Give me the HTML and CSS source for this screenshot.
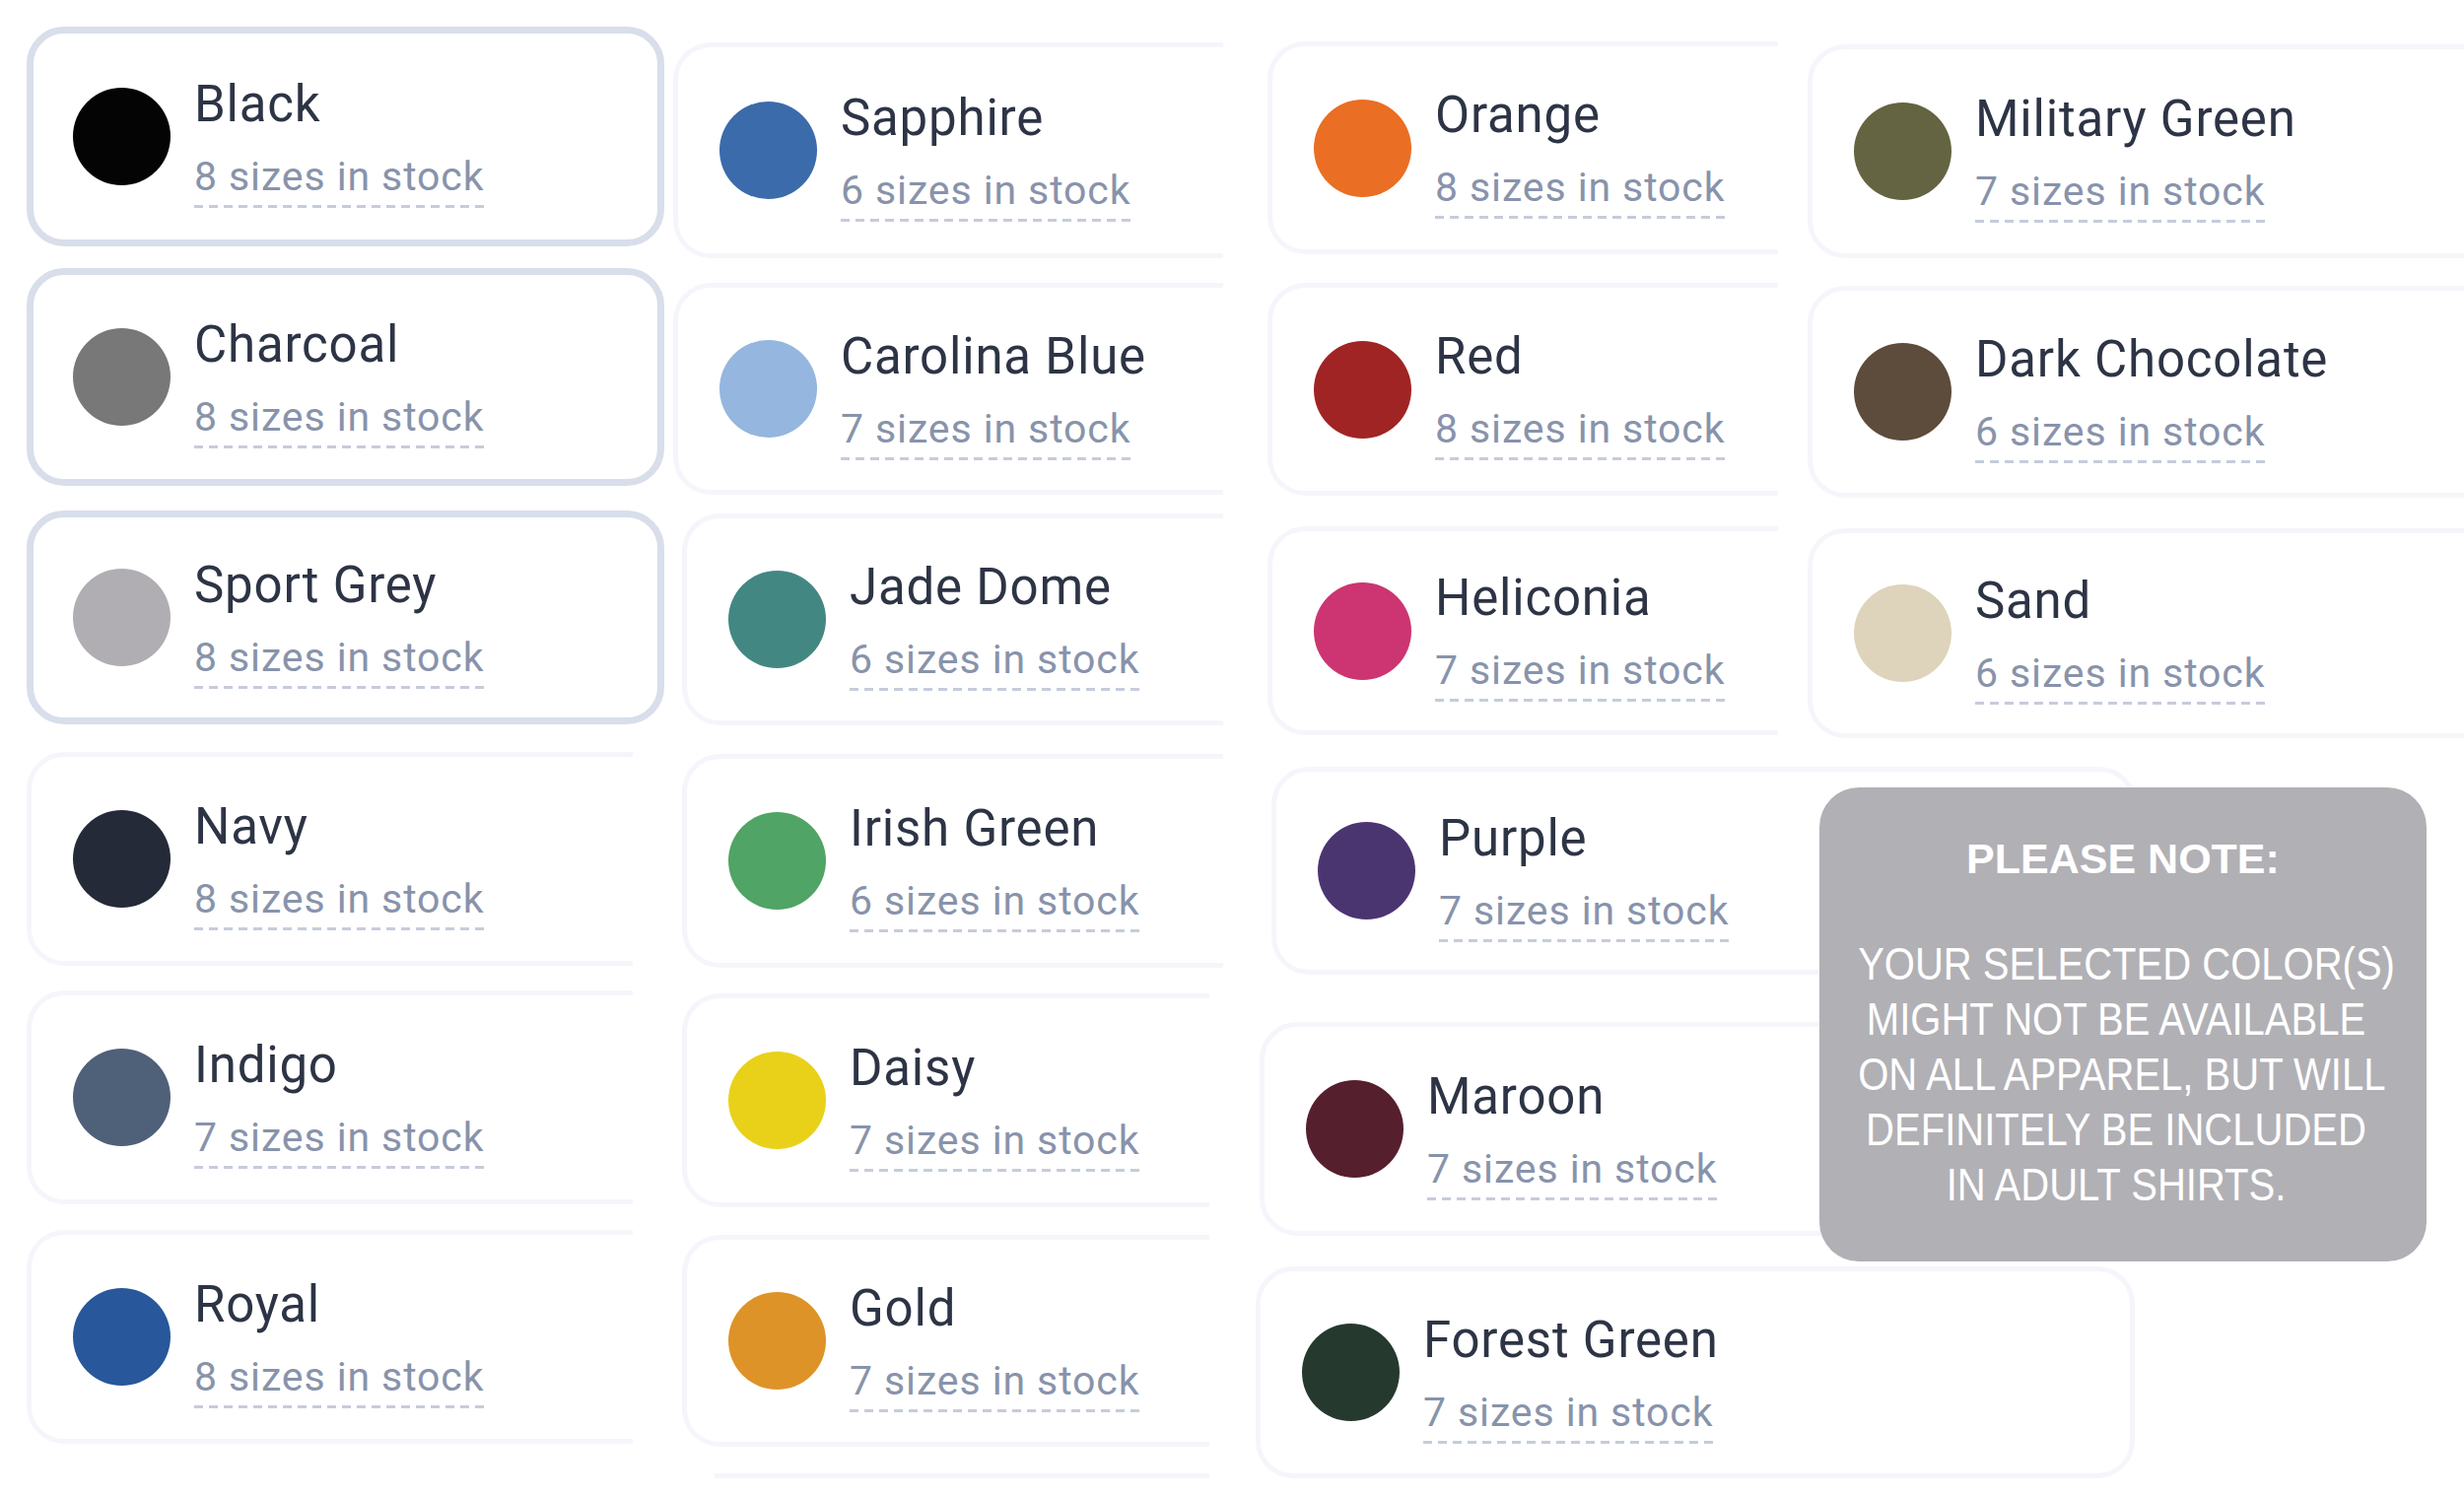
FILE: index.html
```html
<!DOCTYPE html>
<html lang="en">
<head>
<meta charset="utf-8">
<title>Colors</title>
<link rel="stylesheet" href="styles.css">
</head>
<body>
<div class="board">
  <div class="col col1">
    <div class="card sel c-black"><span class="dot"></span><div class="info"><div class="name">Black</div><span class="stock">8 sizes in stock</span></div></div>
    <div class="card sel c-charcoal"><span class="dot"></span><div class="info"><div class="name">Charcoal</div><span class="stock">8 sizes in stock</span></div></div>
    <div class="card sel c-sport"><span class="dot"></span><div class="info"><div class="name">Sport Grey</div><span class="stock">8 sizes in stock</span></div></div>
    <div class="card clip c-navy"><span class="dot"></span><div class="info"><div class="name">Navy</div><span class="stock">8 sizes in stock</span></div></div>
    <div class="card clip c-indigo"><span class="dot"></span><div class="info"><div class="name">Indigo</div><span class="stock">7 sizes in stock</span></div></div>
    <div class="card clip c-royal"><span class="dot"></span><div class="info"><div class="name">Royal</div><span class="stock">8 sizes in stock</span></div></div>
  </div>
  <div class="col col2">
    <div class="card clip c-sapphire"><span class="dot"></span><div class="info"><div class="name">Sapphire</div><span class="stock">6 sizes in stock</span></div></div>
    <div class="card clip c-carolina"><span class="dot"></span><div class="info"><div class="name">Carolina Blue</div><span class="stock">7 sizes in stock</span></div></div>
    <div class="card clip c-jade"><span class="dot"></span><div class="info"><div class="name">Jade Dome</div><span class="stock">6 sizes in stock</span></div></div>
    <div class="card clip c-irish"><span class="dot"></span><div class="info"><div class="name">Irish Green</div><span class="stock">6 sizes in stock</span></div></div>
    <div class="card clip c-daisy"><span class="dot"></span><div class="info"><div class="name">Daisy</div><span class="stock">7 sizes in stock</span></div></div>
    <div class="card clip c-gold"><span class="dot"></span><div class="info"><div class="name">Gold</div><span class="stock">7 sizes in stock</span></div></div>
    <div class="edge-line"></div>
  </div>
  <div class="col col3">
    <div class="card clip c-orange"><span class="dot"></span><div class="info"><div class="name">Orange</div><span class="stock">8 sizes in stock</span></div></div>
    <div class="card clip c-red"><span class="dot"></span><div class="info"><div class="name">Red</div><span class="stock">8 sizes in stock</span></div></div>
    <div class="card clip c-heliconia"><span class="dot"></span><div class="info"><div class="name">Heliconia</div><span class="stock">7 sizes in stock</span></div></div>
    <div class="card c-purple"><span class="dot"></span><div class="info"><div class="name">Purple</div><span class="stock">7 sizes in stock</span></div></div>
    <div class="card c-maroon"><span class="dot"></span><div class="info"><div class="name">Maroon</div><span class="stock">7 sizes in stock</span></div></div>
    <div class="card c-forest"><span class="dot"></span><div class="info"><div class="name">Forest Green</div><span class="stock">7 sizes in stock</span></div></div>
  </div>
  <div class="col col4">
    <div class="card clip c-military"><span class="dot"></span><div class="info"><div class="name">Military Green</div><span class="stock">7 sizes in stock</span></div></div>
    <div class="card clip c-choc"><span class="dot"></span><div class="info"><div class="name">Dark Chocolate</div><span class="stock">6 sizes in stock</span></div></div>
    <div class="card clip c-sand"><span class="dot"></span><div class="info"><div class="name">Sand</div><span class="stock">6 sizes in stock</span></div></div>
    <div class="note">
      <div class="note-title">PLEASE NOTE:</div>
      <div class="note-body">YOUR SELECTED COLOR(S)<br>MIGHT NOT BE AVAILABLE<br>ON ALL APPAREL, BUT WILL<br>DEFINITELY BE INCLUDED<br>IN ADULT SHIRTS.</div>
    </div>
  </div>
</div>
</body>
</html>
```

FILE: styles.css
```css
html, body {
  margin: 0;
  background: #ffffff;
}
body {
  width: 2500px;
  height: 1519px;
  overflow: hidden;
  font-family: Roboto, "Liberation Sans", sans-serif;
}
.board {
  display: flex;
  align-items: flex-start;
  padding-left: 27px;
}
.col {
  display: flex;
  flex-direction: column;
  align-items: flex-start;
  flex: none;
}
.col1 { width: 656px; }
.col2 { width: 591px; }
.col3 { width: 560px; }
.col4 { width: 666px; }

.card {
  box-sizing: border-box;
  display: flex;
  align-items: center;
  flex: none;
  border: 5px solid #f4f6fb;
  border-radius: 38px;
  padding-left: 42px;
  background: #ffffff;
}
.card.sel {
  border: 7px solid #d8deea;
  padding-left: 40px;
}
.card.clip {
  border-right: 0;
  border-radius: 38px 0 0 38px;
}
.dot {
  flex: none;
  width: 99px;
  height: 99px;
  border-radius: 50%;
  margin-right: 24px;
}
.info {
  margin-top: 9px;
  white-space: nowrap;
}
.name {
  font-size: 51px;
  line-height: 60px;
  color: #2d3445;
  letter-spacing: 0.8px;
}
.stock {
  display: inline-block;
  margin-top: 19px;
  padding-bottom: 8px;
  font-size: 41px;
  line-height: 48px;
  color: #8893ab;
  letter-spacing: 0.9px;
  background: linear-gradient(90deg, #c5ccdb 0 9px, transparent 9px 15px) left bottom / 15px 3px repeat-x;
}

/* column 1 */
.c-black { margin-top: 27px; width: 647px; height: 223px; }
.c-black .dot { background: #040404; }
.c-charcoal { margin-top: 22px; width: 647px; height: 221px; }
.c-charcoal .dot { background: #787878; }
.c-sport { margin-top: 25px; width: 647px; height: 217px; }
.c-sport .dot { background: #b0aeb2; }
.c-navy { margin-top: 28px; width: 615px; height: 217px; }
.c-navy .dot { background: #252a38; }
.c-indigo { margin-top: 25px; width: 615px; height: 217px; }
.c-indigo .dot { background: #4f6079; }
.c-royal { margin-top: 26px; width: 615px; height: 217px; }
.c-royal .dot { background: #28579b; }

/* column 2 */
.c-sapphire { margin-top: 43px; width: 558px; height: 219px; }
.c-sapphire .dot { background: #3b6bab; }
.c-carolina { margin-top: 25px; width: 558px; height: 215px; }
.c-carolina .dot { background: #95b6de; }
.c-jade { margin-top: 19px; margin-left: 9px; width: 549px; height: 215px; }
.c-jade .dot { background: #438783; }
.c-irish { margin-top: 29px; margin-left: 9px; width: 549px; height: 217px; }
.c-irish .dot { background: #50a465; }
.c-daisy { margin-top: 26px; margin-left: 9px; width: 535px; height: 217px; }
.c-daisy .dot { background: #e9d11a; }
.c-gold { margin-top: 28px; margin-left: 9px; width: 535px; height: 215px; }
.c-gold .dot { background: #de9328; }
.edge-line {
  margin-top: 27px;
  margin-left: 42px;
  width: 502px;
  height: 5px;
  background: #f4f6fb;
}

/* column 3 */
.c-orange { margin-top: 42px; margin-left: 12px; width: 518px; height: 216px; }
.c-orange .dot { background: #ea6e23; }
.c-red { margin-top: 29px; margin-left: 12px; width: 518px; height: 216px; }
.c-red .dot { background: #a02424; }
.c-heliconia { margin-top: 31px; margin-left: 12px; width: 518px; height: 212px; }
.c-heliconia .dot { background: #cc3571; }
.c-purple { margin-top: 32px; margin-left: 16px; width: 878px; height: 211px; }
.c-purple .dot { background: #4b3571; }
.c-maroon { margin-top: 48px; margin-left: 4px; width: 888px; height: 217px; }
.c-maroon .dot { background: #561f2e; }
.c-forest { margin-top: 31px; width: 892px; height: 215px; }
.c-forest .dot { background: #26392f; }

/* column 4 */
.c-military { margin-top: 45px; width: 800px; height: 217px; }
.c-military .dot { background: #646442; }
.c-choc { margin-top: 28px; width: 800px; height: 215px; }
.c-choc .dot { background: #5d4b3b; }
.c-sand { margin-top: 31px; width: 800px; height: 213px; }
.c-sand .dot { background: #ddd4bb; }

.note {
  box-sizing: border-box;
  margin-top: 50px;
  margin-left: 12px;
  width: 616px;
  height: 481px;
  padding-top: 47px;
  border-radius: 40px;
  background: #b1b0b5;
  color: #ffffff;
  text-align: center;
  font-family: "Liberation Sans", Arial, sans-serif;
}
.note-title {
  font-weight: 700;
  font-size: 43px;
  line-height: 50px;
}
.note-body {
  margin-top: 54px;
  margin-right: 14px;
  font-size: 46px;
  line-height: 56px;
  white-space: nowrap;
  transform: scaleX(0.87);
}
```
